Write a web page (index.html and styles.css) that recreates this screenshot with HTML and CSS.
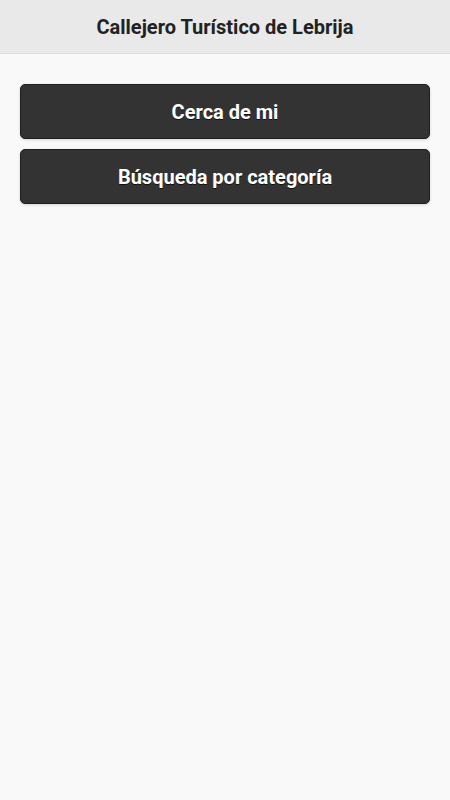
FILE: index.html
```html
<!DOCTYPE html>
<html lang="es">
<head>
	<meta charset="utf-8" />
	<meta name="viewport" content="width=device-width, user-scalable=no" />
	<title>Callejero Turístico de Lebrija</title>
	<link rel="stylesheet" href="styles.css">
</head>
<body>
	<div class="page">
		<div class="header">
			<h1 class="title">Callejero Turístico de Lebrija</h1>
		</div>
		<div class="content">
			<a class="btn" href="#">Cerca de mi</a>
			<a class="btn" href="#">Búsqueda por categoría</a>
		</div>
	</div>
</body>
</html>
```

FILE: styles.css
```css
html, body {
	margin: 0;
	padding: 0;
	height: 100%;
}

body {
	font-family: Roboto, 'Noto Sans', Arial, sans-serif;
	background-color: #f9f9f9;
	color: #333;
}

.page {
	min-height: 100%;
	display: flex;
	flex-direction: column;
}

.header {
	background-color: #e9e9e9;
	border-bottom: 1px solid #dddddd;
	height: 53px;
	display: flex;
	align-items: center;
	justify-content: center;
}

.title {
	margin: 0;
	font-size: 20px;
	font-weight: 700;
	color: #222;
}

.content {
	padding: 30px 20px;
	display: flex;
	flex-direction: column;
	gap: 10px;
}

.btn {
	display: flex;
	align-items: center;
	justify-content: center;
	height: 53px;
	background-color: #333333;
	border: 1px solid #1f1f1f;
	border-radius: 5px;
	box-shadow: 0 1px 3px rgba(0, 0, 0, 0.15);
	color: #fff;
	font-size: 20px;
	font-weight: 700;
	text-decoration: none;
	text-shadow: 0 1px 0 #111;
}
```
